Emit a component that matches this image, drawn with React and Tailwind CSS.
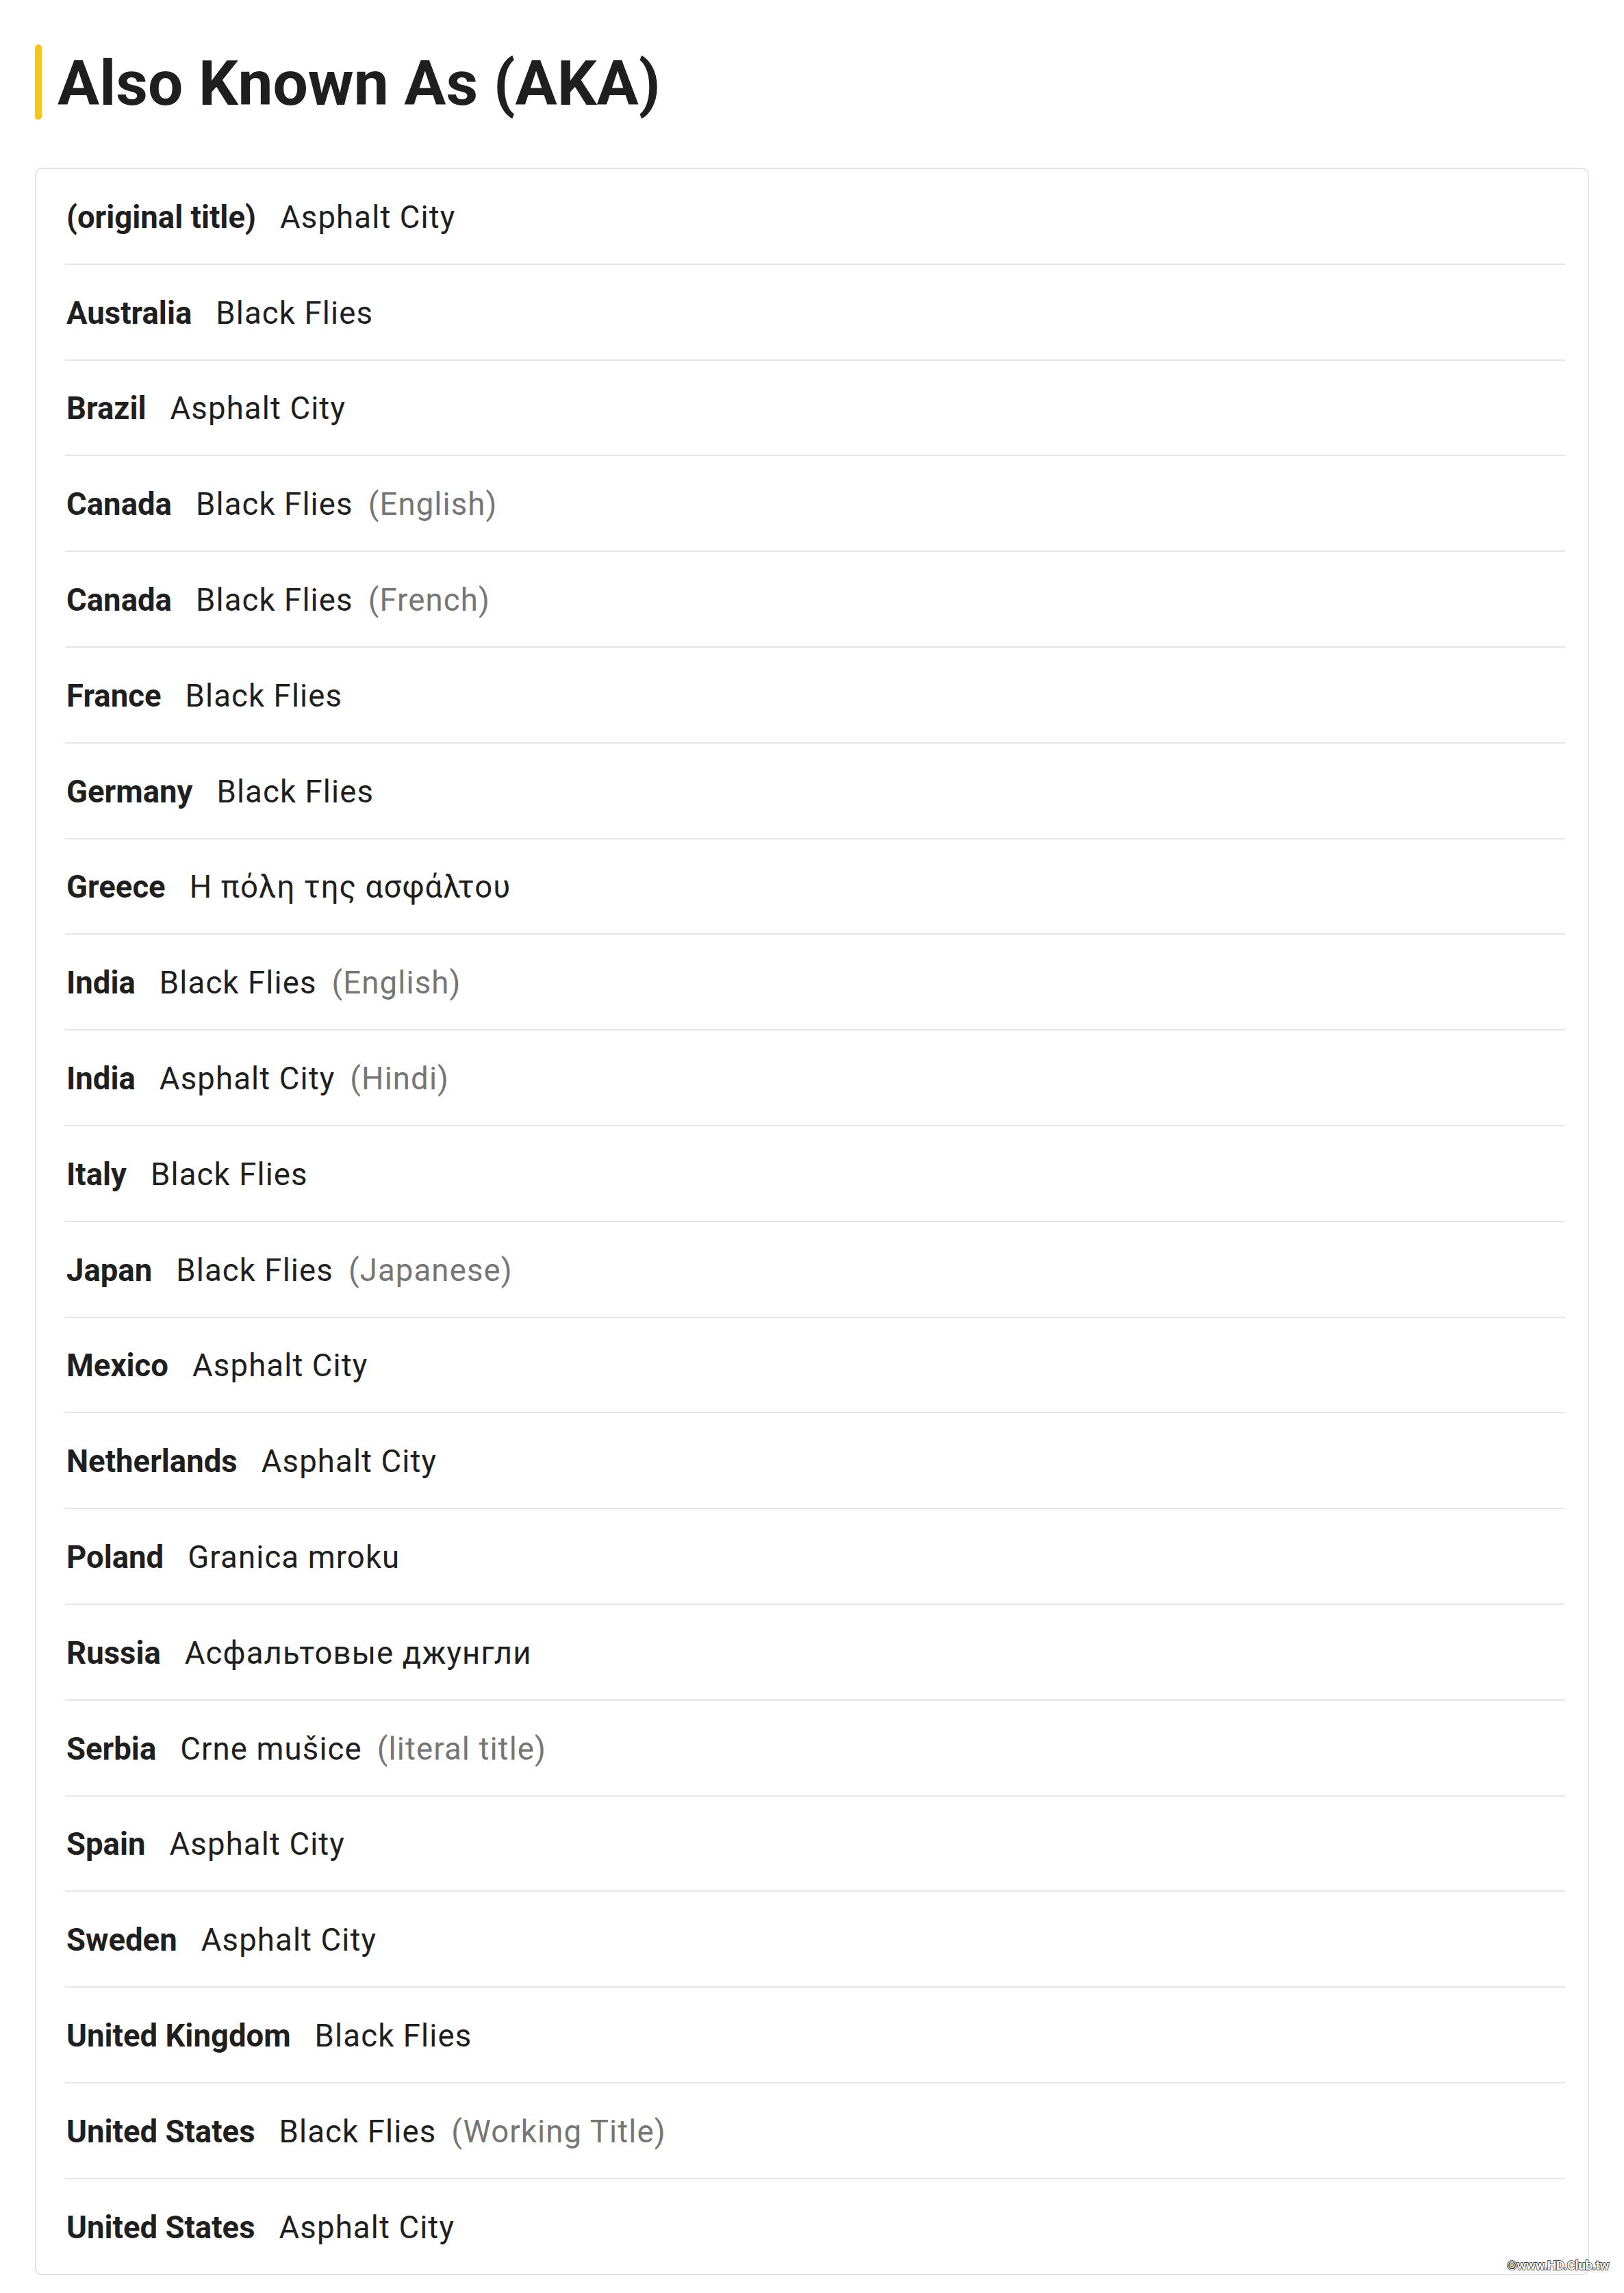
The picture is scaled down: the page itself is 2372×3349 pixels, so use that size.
const akas = [
  { country: "(original title)", title: "Asphalt City" },
  { country: "Australia", title: "Black Flies" },
  { country: "Brazil", title: "Asphalt City" },
  { country: "Canada", title: "Black Flies", note: "(English)" },
  { country: "Canada", title: "Black Flies", note: "(French)" },
  { country: "France", title: "Black Flies" },
  { country: "Germany", title: "Black Flies" },
  { country: "Greece", title: "Η πόλη της ασφάλτου" },
  { country: "India", title: "Black Flies", note: "(English)" },
  { country: "India", title: "Asphalt City", note: "(Hindi)" },
  { country: "Italy", title: "Black Flies" },
  { country: "Japan", title: "Black Flies", note: "(Japanese)" },
  { country: "Mexico", title: "Asphalt City" },
  { country: "Netherlands", title: "Asphalt City" },
  { country: "Poland", title: "Granica mroku" },
  { country: "Russia", title: "Асфальтовые джунгли" },
  { country: "Serbia", title: "Crne mušice", note: "(literal title)" },
  { country: "Spain", title: "Asphalt City" },
  { country: "Sweden", title: "Asphalt City" },
  { country: "United Kingdom", title: "Black Flies" },
  { country: "United States", title: "Black Flies", note: "(Working Title)" },
  { country: "United States", title: "Asphalt City" },
];

function AkaRow({ country, title, note }) {
  return (
    <li className="flex h-[139.8px] items-center border-b-2 border-[#e6e6e6] pt-[4px] last:h-[137.8px] last:border-b-0">
      <span className="pl-[2px] text-[45.5px] font-bold text-[#1f1f1f]">{country}</span>
      <span className="ml-[35px] text-[45.5px] tracking-[0.025em] text-[#1f1f1f]">{title}</span>
      {note && (
        <span className="ml-[22px] text-[45.5px] tracking-[0.025em] text-[#767676]">{note}</span>
      )}
    </li>
  );
}

export default function App() {
  return (
    <div className="relative min-h-[3349px] w-[2372px] bg-white px-[51px] pt-[65px] font-['Roboto','Noto_Sans',sans-serif]">
      <div className="flex h-[110px] items-center">
        <div className="h-full w-[10px] rounded-full bg-[#f5c518]" />
        <h1 className="ml-[23px] pt-[4px] text-[91px] font-bold leading-none text-[#1f1f1f]">
          Also Known As (AKA)
        </h1>
      </div>

      <div className="mt-[70px] rounded-[10px] border-2 border-[#e3e3e3] pl-[42px] pr-[33px]">
        <ul>
          {akas.map((a, i) => (
            <AkaRow key={i} {...a} />
          ))}
        </ul>
      </div>

      <div className="absolute bottom-[26px] right-[22px] text-[19px] font-bold tracking-tight text-white [-webkit-text-stroke:1.5px_#111] [paint-order:stroke_fill]">
        ©www.HD.Club.tw
      </div>
    </div>
  );
}
